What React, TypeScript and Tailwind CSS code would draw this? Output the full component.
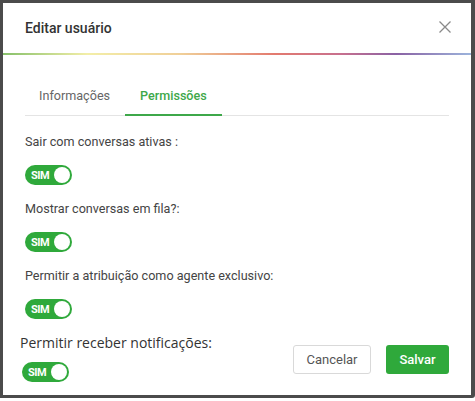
import React from "react";

function Toggle({ className = "" }: { className?: string }) {
  return (
    <div
      className={`flex h-[20px] w-[47px] items-center justify-between rounded-full bg-[#2fa93b] pl-[6px] pr-[2px] ${className}`}
    >
      <span className="text-[11px] font-bold leading-none tracking-[-0.5px] text-white">SIM</span>
      <span className="h-[16px] w-[16px] rounded-full bg-white" />
    </div>
  );
}

export default function App() {
  return (
    <div className="h-[401px] w-[475px] bg-white" style={{ fontFamily: "Roboto, 'Liberation Sans', sans-serif" }}>
      <div className="flex h-[398px] w-[475px] flex-col rounded-br-[3px] border-b-[3px] border-l-[3px] border-r-[4px] border-t-[3px] border-[#4b4b4b] bg-white">
        <div className="flex h-[50px] items-center justify-between pl-[22px] pr-[19px]">
          <span className="text-[14px] font-medium text-[#333]">Editar usuário</span>
          <svg width="14" height="14" viewBox="0 0 14 14" className="mb-[2px]">
            <path d="M1.5 1.5 L12.5 12.5 M12.5 1.5 L1.5 12.5" stroke="#8a8a8a" strokeWidth="1.3" fill="none" />
          </svg>
        </div>
        <div className="h-[2px] w-full bg-[linear-gradient(to_right,#86c06a_0%,#f3eea8_18%,#f0cf98_38%,#e37a6f_58%,#c8708e_72%,#8a62a4_84%,#9cb4dc_100%)]" />
        <div className="flex flex-1 flex-col px-[22px] pt-[23px]">
          <div className="flex border-b border-[#e4e4e4]">
            <div className="px-[14px] pb-[10px] pt-[9px] text-[12.6px] leading-[18px] text-[#666]">Informações</div>
            <div className="ml-[1px] -mb-px border-b-2 border-[#3ea84a] px-[15px] pb-[9px] pt-[9px] text-[12.6px] font-medium leading-[18px] text-[#3ea84a]">
              Permissões
            </div>
          </div>
          <div className="mt-[17px] text-[12.6px] leading-[18px] text-[#444]">Sair com conversas ativas :</div>
          <Toggle className="mt-[14px]" />
          <div className="mt-[15px] text-[12.6px] leading-[18px] text-[#444]">Mostrar conversas em fila?:</div>
          <Toggle className="mt-[14px]" />
          <div className="mt-[15px] text-[12.6px] leading-[18px] text-[#444]">Permitir a atribuição como agente exclusivo:</div>
          <Toggle className="mt-[14px]" />
          <div className="mt-[14px] flex items-start justify-between">
            <div className="-ml-[5px] flex flex-col">
              <div
                className="text-[14px] leading-[20px] text-[#333]"
                style={{ fontFamily: "'Open Sans', 'Noto Sans', sans-serif" }}
              >
                Permitir receber notificações:
              </div>
              <Toggle className="ml-[2px] mt-[9px]" />
            </div>
            <div className="mt-[12px] flex gap-[15px]">
              <button className="h-[29px] w-[78px] rounded-[3px] border border-[#d9d9d9] bg-white text-[13px] text-[#555]">
                Cancelar
              </button>
              <button className="h-[29px] w-[63px] rounded-[3px] bg-[#2fa93b] text-[13px] font-medium text-white">
                Salvar
              </button>
            </div>
          </div>
        </div>
      </div>
    </div>
  );
}
